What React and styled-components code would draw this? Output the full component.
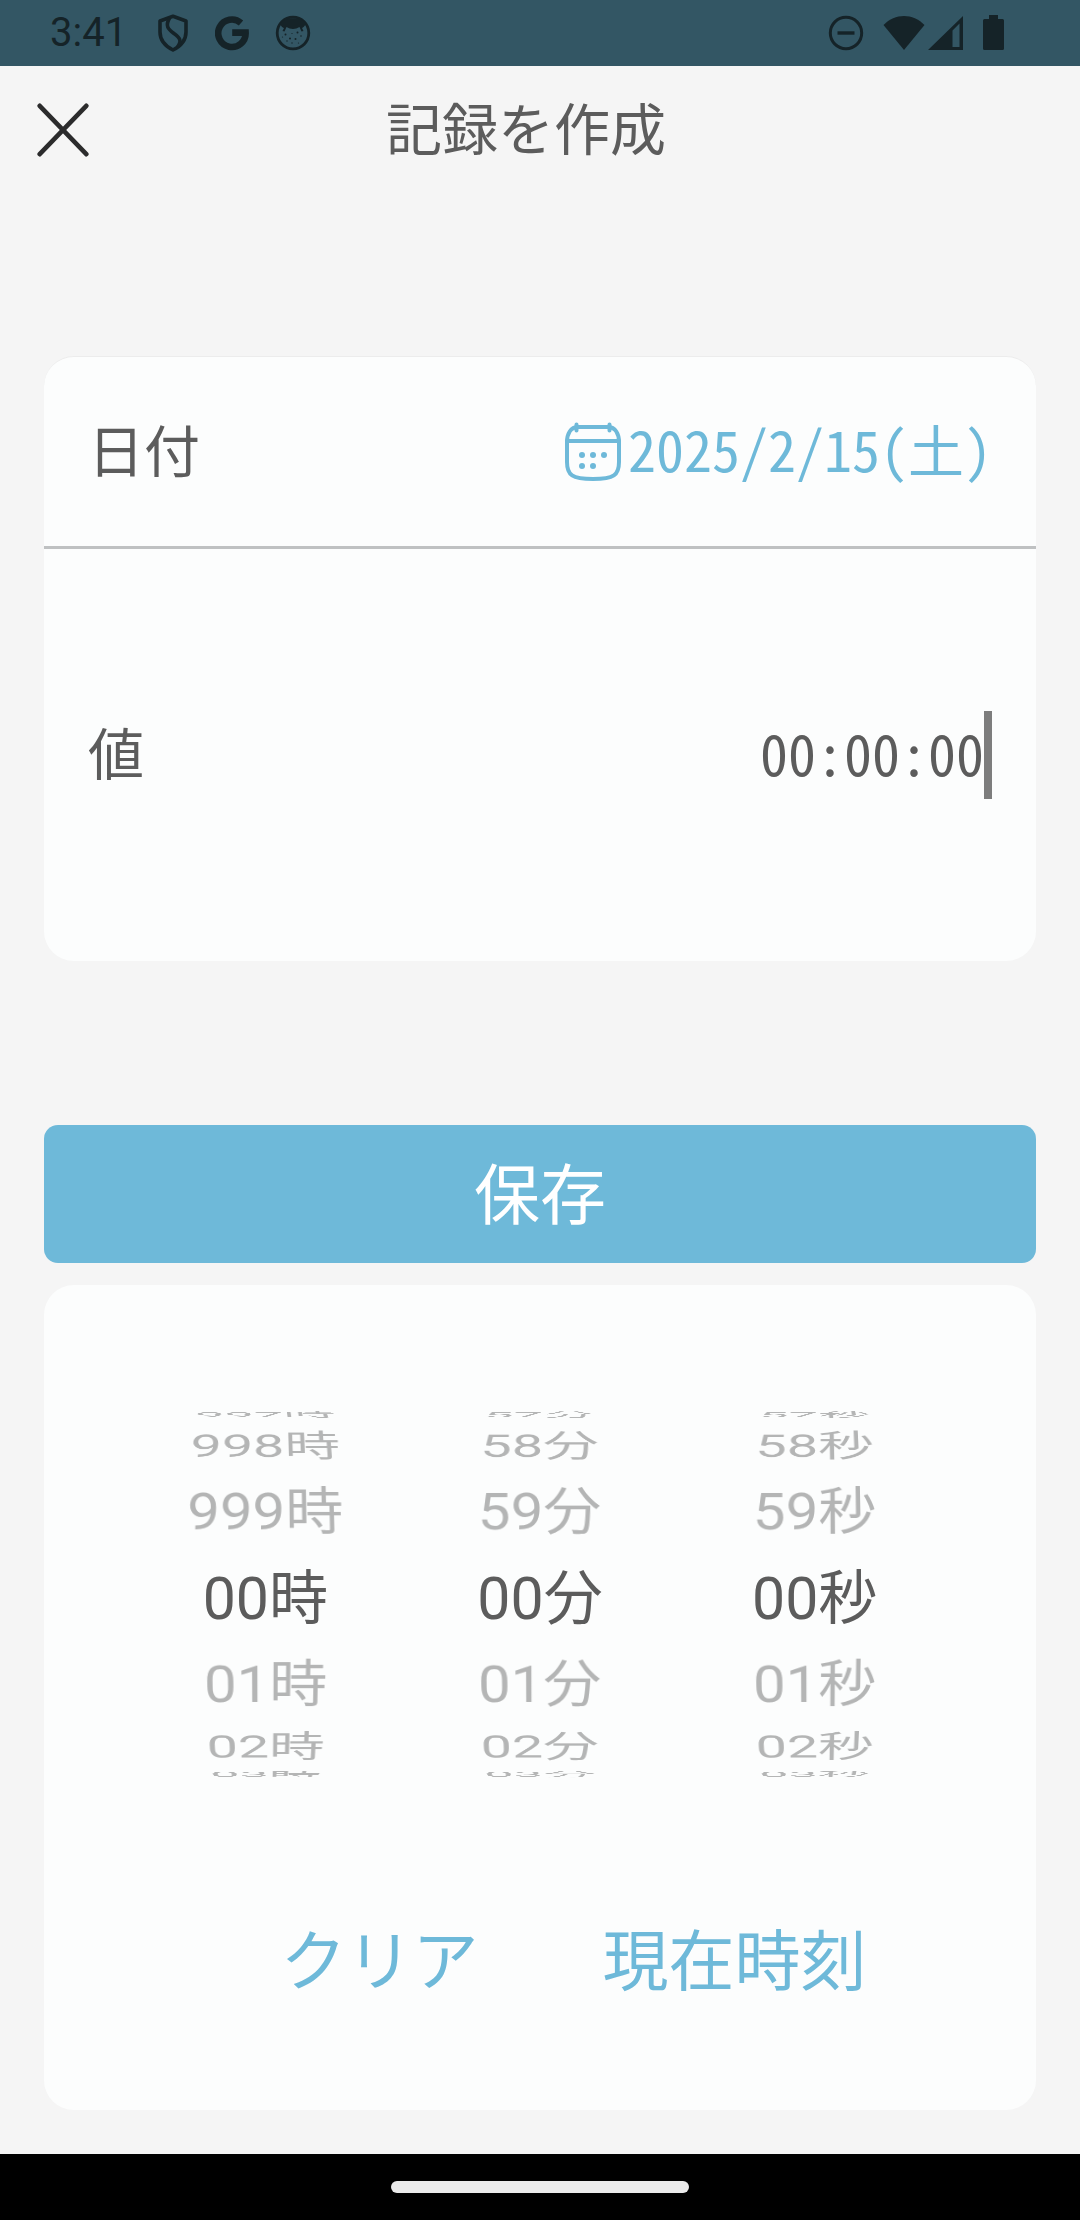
import React, { useState } from "react";
import styled, { createGlobalStyle, css } from "styled-components";

const color = {
  page: "#f5f5f5",
  card: "#fcfdfd",
  accent: "#6eb9d9",
  text: "#5c5c5c",
  muted: "#b4b5b5",
  status: "#335664",
  statusInk: "#152328",
};

const gothic = '"Noto Sans CJK JP", sans-serif';
const roboto = 'Roboto, "Noto Sans CJK JP", sans-serif';

/* The gothic face sits low in its line box; this centres it optically. */
const opticalCenter = css`
  padding-bottom: 8px;
`;

const GlobalStyle = createGlobalStyle`
  *, *::before, *::after { box-sizing: border-box; }
  body { margin: 0; background: ${color.page}; }
  button, input {
    margin: 0; padding: 0; border: 0; background: none;
    font: inherit; color: inherit; outline: none;
  }
  button { cursor: pointer; }
`;

const Screen = styled.div`
  min-height: 100vh;
  display: flex;
  flex-direction: column;
  background: ${color.page};
  color: ${color.text};
  font-family: ${gothic};
  font-size: 56px;
  line-height: 80px;
`;

const StatusBar = styled.div`
  height: 66px;
  padding: 0 76px 0 50px;
  display: flex;
  align-items: center;
  justify-content: space-between;
  background: ${color.status};
  color: ${color.statusInk};
  font-family: ${roboto};
  font-size: 40px;
  line-height: 66px;
`;

const StatusGroup = styled.div`
  display: flex;
  align-items: center;
  gap: ${(p) => p.$gap}px;
  svg { display: block; }
`;

const Clock = styled.span`
  margin-right: 4px;
`;

const Header = styled.header`
  display: grid;
  grid-template-columns: 126px 1fr 126px;
  align-items: center;
  height: 128px;
  padding-right: 28px;
`;

const CloseButton = styled.button`
  height: 128px;
  display: grid;
  place-items: center;
  svg { display: block; }
`;

const Title = styled.h1`
  ${opticalCenter}
  margin: 0;
  text-align: center;
  font-size: 56px;
  font-weight: 400;
`;

const Main = styled.main`
  flex: 1;
  padding: 162px 44px 44px;
`;

const Card = styled.section`
  background: ${color.card};
  border-radius: 30px;
`;

const FormCard = styled(Card)`
  margin-bottom: 164px;
  border-top: 1px solid #ececec;
`;

const Row = styled.div`
  display: flex;
  align-items: center;
  justify-content: space-between;
  height: ${(p) => p.$height}px;
  padding: 0 44px;
  & + & { border-top: 3px solid #bfc1c2; }
`;

const RowLabel = styled.label`
  ${opticalCenter}
`;

const DateButton = styled.button`
  display: flex;
  align-items: center;
  gap: 6px;
  color: ${color.accent};
  font-feature-settings: "hwid";
  svg { display: block; }
`;

const DateText = styled.span`
  ${opticalCenter}
`;

const ValueField = styled.div`
  display: flex;
  align-items: center;
`;

const ValueInput = styled.input`
  &&& { ${opticalCenter} }
  width: 300px;
  height: 88px;
  text-align: right;
  font-feature-settings: "hwid";
`;

const Caret = styled.span`
  width: 8px;
  height: 88px;
  background: #7d7d7d;
`;

const SaveButton = styled.button`
  &&& { ${opticalCenter} }
  display: block;
  width: 100%;
  height: 138px;
  margin-bottom: 22px;
  border-radius: 14px;
  background: ${color.accent};
  color: #fff;
  font-size: 66px;
`;

const PickerCard = styled(Card)`
  padding-bottom: 93px;
`;

const Wheels = styled.div`
  display: grid;
  grid-template-columns: repeat(3, 1fr);
  height: 618px;
  padding: 0 84px;
  font-family: ${roboto};
  font-size: 59px;
`;

const Wheel = styled.div`
  display: grid;
  place-items: center;
  perspective: 1200px;
`;

const WheelItem = styled.button`
  &&& { padding-top: 10px; }
  grid-area: 1 / 1;
  white-space: nowrap;
  color: ${(p) => (p.$selected ? color.text : color.muted)};
`;

const Actions = styled.div`
  display: grid;
  grid-template-columns: 1fr 1fr;
  padding: 0 124px 0 158px;
`;

const TextButton = styled.button`
  &&& { ${opticalCenter} }
  height: 114px;
  color: ${color.accent};
  font-size: 66px;
`;

const NavigationBar = styled.div`
  height: 66px;
  display: grid;
  place-items: center;
  background: #000;
`;

const HomeHandle = styled.div`
  width: 298px;
  height: 12px;
  border-radius: 6px;
  background: #ebebeb;
`;

const ShieldIcon = () => (
  <svg width="32" height="38" viewBox="0 0 32 38" fill="none" stroke="currentColor" strokeWidth="3.6" strokeLinejoin="round">
    <path d="M16 2.2 29 7v11c0 8-5 14-13 18C8 32 3 26 3 18V7Z" />
    <path d="M12.500 4C8 12 11 15 17 19.500c7 5 7.500 8 3.500 13.500" />
  </svg>
);

const GoogleIcon = () => (
  <svg width="34" height="36" viewBox="0 0 34 36" fill="none" stroke="currentColor" strokeWidth="6.6">
    <path d="M26 8A13.700 13.700 0 1 0 30.600 17.600H17.200" />
  </svg>
);

const FaceIcon = () => (
  <svg width="36" height="36" viewBox="0 0 36 36">
    <circle cx="18" cy="18" r="15.800" fill="none" stroke="currentColor" strokeWidth="2.800" />
    <path d="M5.500 8C10 1.500 26 1.500 30.500 8c.5 2-2 4.500-3.500 5l1.500 3-2 .4-2-4.400c-4 2.600-9 2.600-13 0l-2 4.400-2-.4L9 13c-2-.6-4-3-3.500-5Z" fill="currentColor" />
    <g fill="currentColor">
      <circle cx="10.500" cy="19.500" r="1" /><circle cx="15" cy="23.500" r="1" /><circle cx="22.500" cy="17.500" r="1" />
      <circle cx="20.500" cy="24" r="1" /><circle cx="26" cy="21" r=".8" /><circle cx="12" cy="26" r=".7" />
      <circle cx="17" cy="28" r=".7" /><circle cx="23.500" cy="28" r=".6" /><circle cx="17" cy="18.500" r=".6" /><circle cx="7.500" cy="22" r=".6" />
    </g>
  </svg>
);

const DoNotDisturbIcon = () => (
  <svg width="36" height="36" viewBox="0 0 36 36" fill="none" stroke="currentColor">
    <circle cx="18" cy="18" r="15.700" strokeWidth="3" />
    <path d="M9.500 18H26.500" strokeWidth="3.400" />
  </svg>
);

const WifiIcon = () => (
  <svg width="42" height="36" viewBox="0 0 42 36" fill="currentColor">
    <path d="M.5 10C12-2 30-2 41.500 10L21 35Z" />
  </svg>
);

const SignalIcon = () => (
  <svg width="36" height="36" viewBox="0 0 36 36" fill="currentColor" fillRule="evenodd">
    <path d="M35 1V35H0ZM24.500 15.500V32H31.500V8.500Z" />
  </svg>
);

const BatteryIcon = () => (
  <svg width="21" height="36" viewBox="0 0 21 36" fill="currentColor">
    <path d="M6 0h9v4h4.500A1.500 1.500 0 0 1 21 5.500v28a1.500 1.500 0 0 1-1.500 1.500h-18A1.500 1.500 0 0 1 0 33.500v-28A1.500 1.500 0 0 1 1.500 4H6Z" />
  </svg>
);

const CloseIcon = () => (
  <svg width="52" height="54" viewBox="0 0 52 54" fill="none" stroke="#2b2b2c" strokeWidth="4.600" strokeLinecap="round">
    <path d="M2.700 2.800 49.300 51.200M49.300 2.800 2.700 51.200" />
  </svg>
);

const CalendarIcon = () => (
  <svg width="58" height="60" viewBox="0 0 58 60" fill="none" stroke="currentColor" strokeWidth="4" strokeLinecap="round">
    <path d="M14 5H44C51.500 5 55 12 55 20V40C55 53 50 57 29 57S3 53 3 40V20C3 12 6.500 5 14 5Z" />
    <path d="M3 19H55M12.500 2.500v6M45.500 2.500v6" />
    <g fill="currentColor" stroke="none">
      <circle cx="18" cy="33" r="3" /><circle cx="29" cy="33" r="3" /><circle cx="40" cy="33" r="3" />
      <circle cx="18" cy="44" r="3" /><circle cx="29" cy="44" r="3" />
    </g>
  </svg>
);

const pad = (n) => String(n).padStart(2, "0");

const RADIUS = 211;
const STEP_ANGLE = 24.6;
const STEPS = [-3, -2, -1, 0, 1, 2, 3];

function TimeWheel({ label, unit, size, value, onChange }) {
  return (
    <Wheel role="listbox" aria-label={label}>
      {STEPS.map((step) => {
        const n = (value + step + size) % size;
        return (
          <WheelItem
            key={n}
            type="button"
            role="option"
            aria-selected={step === 0}
            $selected={step === 0}
            onClick={() => onChange(n)}
            style={{
              transform: `translateZ(${-RADIUS}px) rotateX(${-step * STEP_ANGLE}deg) translateZ(${RADIUS}px)`,
            }}
          >
            {pad(n)}
            {unit}
          </WheelItem>
        );
      })}
    </Wheel>
  );
}

export default function App() {
  const [time, setTime] = useState({ h: 0, m: 0, s: 0 });
  const update = (key) => (n) => setTime((t) => ({ ...t, [key]: n }));
  const setNow = () => {
    const d = new Date();
    setTime({ h: d.getHours(), m: d.getMinutes(), s: d.getSeconds() });
  };

  return (
    <>
      <GlobalStyle />
      <Screen lang="ja">
        <StatusBar>
          <StatusGroup $gap={26}>
            <Clock>3:41</Clock>
            <ShieldIcon />
            <GoogleIcon />
            <FaceIcon />
          </StatusGroup>
          <StatusGroup $gap={19}>
            <DoNotDisturbIcon />
            <StatusGroup $gap={3}>
              <WifiIcon />
              <SignalIcon />
            </StatusGroup>
            <BatteryIcon />
          </StatusGroup>
        </StatusBar>

        <Header>
          <CloseButton type="button" aria-label="閉じる">
            <CloseIcon />
          </CloseButton>
          <Title>記録を作成</Title>
        </Header>

        <Main>
          <FormCard>
            <Row $height={189}>
              <RowLabel htmlFor="date">日付</RowLabel>
              <DateButton id="date" type="button">
                <CalendarIcon />
                <DateText>2025/2/15(土)</DateText>
              </DateButton>
            </Row>
            <Row $height={415}>
              <RowLabel htmlFor="value">値</RowLabel>
              <ValueField>
                <ValueInput id="value" readOnly value={`${pad(time.h)}:${pad(time.m)}:${pad(time.s)}`} />
                <Caret />
              </ValueField>
            </Row>
          </FormCard>

          <SaveButton type="button">保存</SaveButton>

          <PickerCard>
            <Wheels>
              <TimeWheel label="時" unit="時" size={1000} value={time.h} onChange={update("h")} />
              <TimeWheel label="分" unit="分" size={60} value={time.m} onChange={update("m")} />
              <TimeWheel label="秒" unit="秒" size={60} value={time.s} onChange={update("s")} />
            </Wheels>
            <Actions>
              <TextButton type="button" onClick={() => setTime({ h: 0, m: 0, s: 0 })}>
                クリア
              </TextButton>
              <TextButton type="button" onClick={setNow}>
                現在時刻
              </TextButton>
            </Actions>
          </PickerCard>
        </Main>

        <NavigationBar>
          <HomeHandle />
        </NavigationBar>
      </Screen>
    </>
  );
}
